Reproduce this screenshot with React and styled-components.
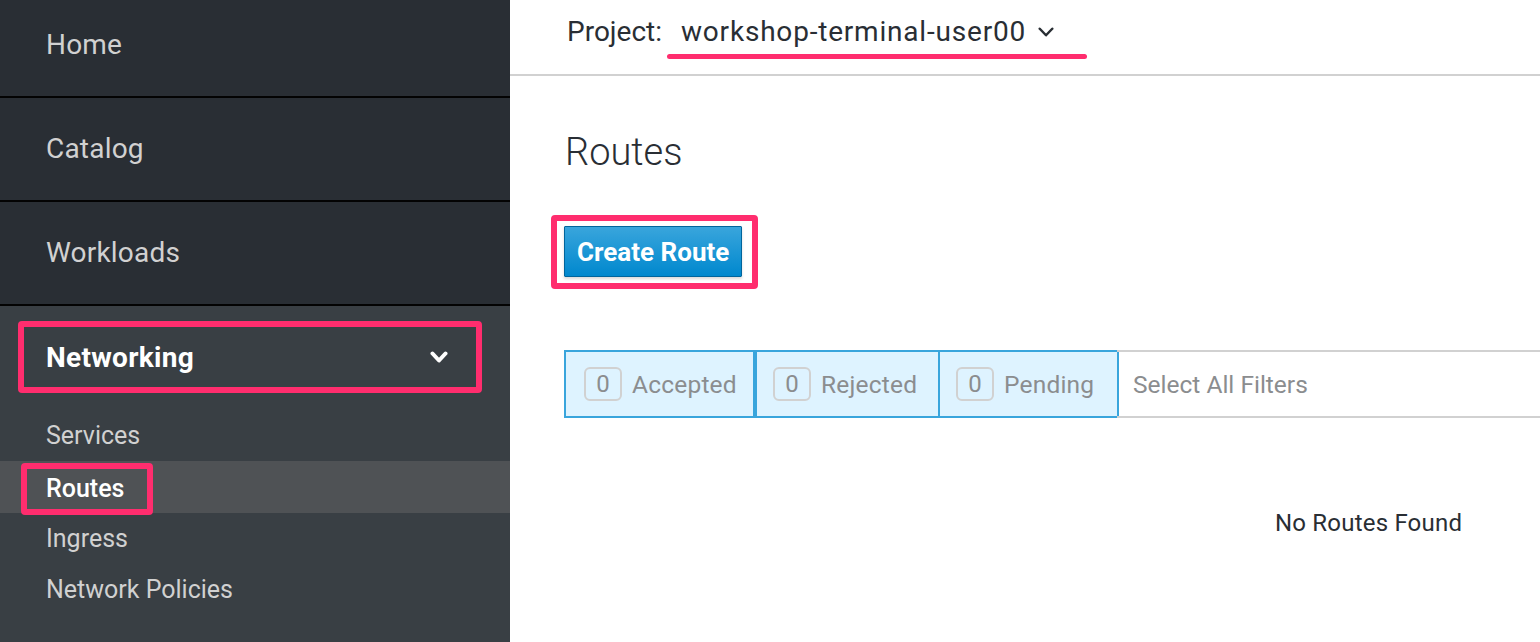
import styled, { createGlobalStyle } from 'styled-components';

const GlobalStyle = createGlobalStyle`
  html, body {
    margin: 0;
    padding: 0;
    background: #fff;
  }
  body {
    font-family: Roboto, "Liberation Sans", sans-serif;
  }
`

const Page = styled.div`
  display: flex;
  width: 1540px;
  height: 642px;
  overflow: hidden;
`

const Sidebar = styled.nav`
  width: 510px;
  flex-shrink: 0;
  display: flex;
  flex-direction: column;
  margin-top: -6px;
  background: #393f44;
`

const TopItem = styled.div`
  height: 104px;
  box-sizing: border-box;
  display: flex;
  align-items: center;
  padding: 0 0 1px 46px;
  background: #292e34;
  border-bottom: 2px solid #030303;
  color: #d1d1d1;
  font-size: 28px;
  letter-spacing: 0.2px;
`

const Section = styled.div`
  display: flex;
  flex-direction: column;
  padding-top: 15px;
`

const Highlight = styled.div`
  border: 6px solid #ff2d6e;
  border-radius: 4px;
`

const SectionHead = styled(Highlight)`
  margin-left: 18px;
  width: 464px;
  height: 72px;
  box-sizing: border-box;
  display: flex;
  align-items: center;
  justify-content: space-between;
  padding: 0 28px 0 22px;
  color: #fff;
  font-size: 28px;
  font-weight: 700;
  letter-spacing: 0.3px;
`

const SubList = styled.div`
  display: flex;
  flex-direction: column;
  padding-top: 17px;
`

const SubItem = styled.div`
  height: ${p => p.active ? 52 : 51}px;
  display: flex;
  align-items: center;
  padding-left: 46px;
  color: ${p => p.active ? '#fff' : '#d1d1d1'};
  background: ${p => p.active ? '#4f5255' : 'transparent'};
  font-size: 25px;
  font-weight: ${p => p.active ? 500 : 400};
`

const RoutesMark = styled(Highlight)`
  margin: 3px 0 0 -25px;
  padding: 5px 23px 6px 19px;
`

const Main = styled.main`
  flex: 1;
  display: flex;
  flex-direction: column;
  background: #fff;
  color: #292e34;
`

const Header = styled.header`
  height: 76px;
  box-sizing: border-box;
  border-bottom: 2px solid #d1d1d1;
  display: flex;
  align-items: flex-start;
  padding: 16px 0 0 57px;
  font-size: 28px;
  line-height: 32px;
  gap: 19px;
`

const ProjectName = styled.div`
  position: relative;
  display: flex;
  align-items: center;
  gap: 12px;
  letter-spacing: 0.8px;
  &::after {
    content: '';
    position: absolute;
    left: -14px;
    right: -33px;
    top: 38px;
    height: 5px;
    border-radius: 3px;
    background: #ff2d6e;
  }
`

const Content = styled.div`
  display: flex;
  flex-direction: column;
  padding: 50px 0 0 54px;
`

const Title = styled.h1`
  margin: 0 0 0 1px;
  font-size: 38px;
  font-weight: 300;
  color: #292e34;
  line-height: 52px;
`

const ButtonFrame = styled(Highlight)`
  align-self: flex-start;
  margin: 37px 0 0 -13px;
  padding: 5px 10px 6px 7px;
`

const PrimaryButton = styled.button`
  display: block;
  height: 51px;
  padding: 0 12px;
  border: 1px solid #00659c;
  border-radius: 1px;
  background: linear-gradient(180deg, #39a5dc 0%, #0088ce 100%);
  color: #fff;
  font-family: inherit;
  font-size: 26px;
  font-weight: 700;
  box-shadow: 0 2px 3px rgba(0, 0, 0, 0.15);
`

const FilterBar = styled.div`
  display: flex;
  height: 68px;
  margin-top: 61px;
`

const Filter = styled.div`
  display: flex;
  align-items: center;
  gap: 10px;
  width: ${p => p.w}px;
  box-sizing: border-box;
  padding-left: ${p => p.first ? 18 : 16}px;
  background: #def3ff;
  border: 2px solid #39a5dc;
  border-right-width: ${p => p.first ? 4 : 2}px;
  margin-left: ${p => p.first ? 0 : -2}px;
  color: #8b8d8f;
  font-size: 24.5px;
  letter-spacing: 0.2px;
`

const Badge = styled.span`
  width: 38px;
  height: 34px;
  box-sizing: border-box;
  border: 2px solid #d1d1d1;
  border-radius: 6px;
  display: flex;
  align-items: center;
  justify-content: center;
  font-size: 24px;
`

const SelectAll = styled.div`
  flex: 1;
  display: flex;
  align-items: center;
  padding-left: 16px;
  margin-left: -2px;
  border-top: 2px solid #d1d1d1;
  border-bottom: 2px solid #d1d1d1;
  color: #8b8d8f;
  font-size: 24.5px;
`

const Empty = styled.div`
  margin: 91px 0 0 711px;
  font-size: 24px;
  letter-spacing: 0.2px;
  color: #292e34;
`

const Chevron = ({ w, h, stroke }) => (
  <svg width={w} height={h} viewBox={`0 0 ${w} ${h}`} fill="none">
    <path
      d={`M${stroke / 2 + 0.5} ${stroke / 2 + 0.5} L${w / 2} ${h - stroke / 2 - 0.5} L${w - stroke / 2 - 0.5} ${stroke / 2 + 0.5}`}
      stroke="currentColor"
      strokeWidth={stroke}
      strokeLinecap="round"
      strokeLinejoin="round"
    />
  </svg>
)

const filters = [
  { label: 'Accepted', w: 193 },
  { label: 'Rejected', w: 185 },
  { label: 'Pending', w: 181 },
]

export default function App() {
  return (
    <Page>
      <GlobalStyle />
      <Sidebar>
        <TopItem>Home</TopItem>
        <TopItem>Catalog</TopItem>
        <TopItem>Workloads</TopItem>
        <Section>
          <SectionHead>
            Networking
            <Chevron w={18} h={12} stroke={4} />
          </SectionHead>
          <SubList>
            <SubItem>Services</SubItem>
            <SubItem active>
              <RoutesMark>Routes</RoutesMark>
            </SubItem>
            <SubItem>Ingress</SubItem>
            <SubItem>Network Policies</SubItem>
          </SubList>
        </Section>
      </Sidebar>
      <Main>
        <Header>
          <span>Project:</span>
          <ProjectName>
            workshop-terminal-user00
            <Chevron w={16} h={10} stroke={2.5} />
          </ProjectName>
        </Header>
        <Content>
          <Title>Routes</Title>
          <ButtonFrame>
            <PrimaryButton>Create Route</PrimaryButton>
          </ButtonFrame>
          <FilterBar>
            {filters.map((f, i) => (
              <Filter key={f.label} w={f.w} first={i === 0}>
                <Badge>0</Badge>
                {f.label}
              </Filter>
            ))}
            <SelectAll>Select All Filters</SelectAll>
          </FilterBar>
          <Empty>No Routes Found</Empty>
        </Content>
      </Main>
    </Page>
  )
}
